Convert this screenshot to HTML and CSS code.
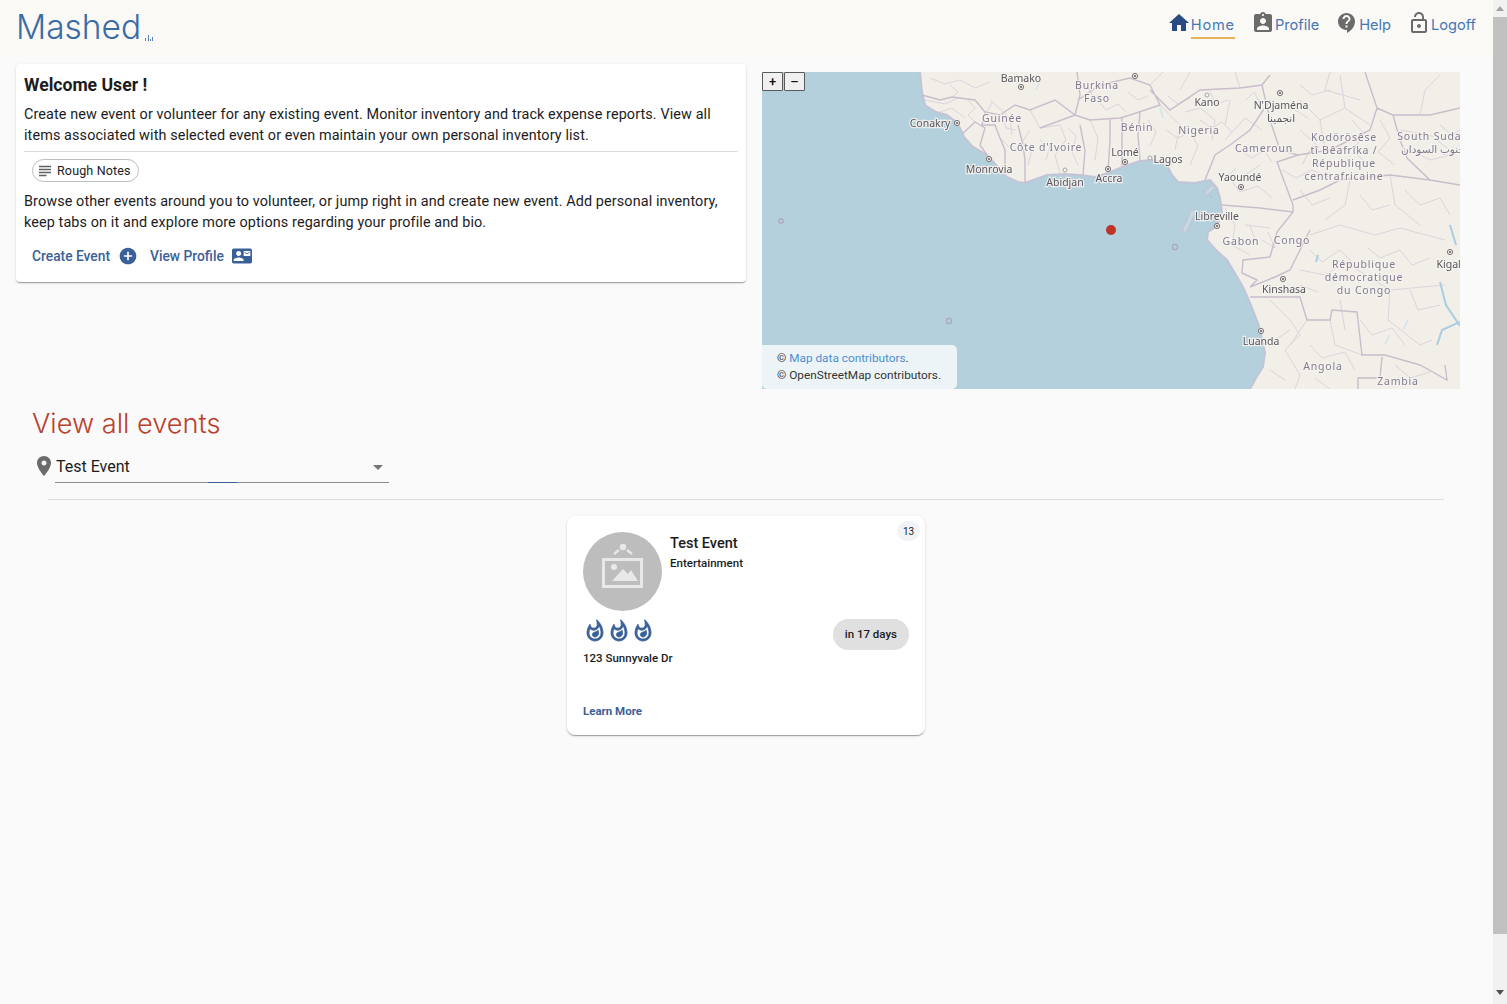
FILE: index.html
```html
<!DOCTYPE html>
<html lang="en">
<head>
    <meta charset="UTF-8">
    <title>Mashed</title>
    <link rel="stylesheet" href="styles.css">
</head>
<body>

<div class="page">

    <header class="topbar">
        <a class="logo">Mashed<svg class="logo-mark" viewBox="0 0 8 6"><path d="M0 3h1v3H0zM3 0h1v6H3zM5 4h1v2H5zM7 2h1v4H7z"/></svg></a>
        <nav class="nav">
            <a class="nav-item nav-active">
                <svg viewBox="0 0 24 24"><path d="M10 20v-6h4v6h5v-8h3L12 3 2 12h3v8z"/></svg>
                <span>Home</span>
            </a>
            <a class="nav-item">
                <svg viewBox="0 0 24 24"><path d="M19 3h-4.18C14.4 1.84 13.3 1 12 1c-1.3 0-2.4.84-2.82 2H5c-1.1 0-2 .9-2 2v14c0 1.1.9 2 2 2h14c1.1 0 2-.9 2-2V5c0-1.1-.9-2-2-2zm-7 0c.55 0 1 .45 1 1s-.45 1-1 1-1-.45-1-1 .45-1 1-1zm0 4c1.66 0 3 1.34 3 3s-1.34 3-3 3-3-1.34-3-3 1.34-3 3-3zm6 12H6v-1.4c0-2 4-3.1 6-3.1s6 1.1 6 3.1V19z"/></svg>
                <span>Profile</span>
            </a>
            <a class="nav-item">
                <svg viewBox="0 0 24 24"><path d="M11.5 2C6.81 2 3 5.81 3 10.5S6.81 19 11.5 19h.5v3c4.86-2.34 8-7 8-11.5C20 5.81 16.19 2 11.5 2zm1 14.5h-2v-2h2v2zm0-3.5h-2c0-3.25 3-3 3-5 0-1.1-.9-2-2-2s-2 .9-2 2h-2c0-2.21 1.79-4 4-4s4 1.79 4 4c0 2.5-3 2.75-3 5z"/></svg>
                <span>Help</span>
            </a>
            <a class="nav-item">
                <svg viewBox="0 0 24 24"><path d="M12 17c1.1 0 2-.9 2-2s-.9-2-2-2-2 .9-2 2 .9 2 2 2zm6-9h-1V6c0-2.76-2.24-5-5-5S7 3.24 7 6h1.9c0-1.71 1.39-3.1 3.1-3.1 1.71 0 3.1 1.39 3.1 3.1v2H6c-1.1 0-2 .9-2 2v10c0 1.1.9 2 2 2h12c1.1 0 2-.9 2-2V10c0-1.1-.9-2-2-2zm0 12H6V10h12v10z"/></svg>
                <span>Logoff</span>
            </a>
        </nav>
    </header>

    <section class="intro">
        <div class="welcome">
            <h2 class="welcome-title">Welcome User !</h2>
            <p class="welcome-text">Create new event or volunteer for any existing event. Monitor inventory and track expense reports. View all items associated with selected event or even maintain your own personal inventory list.</p>
            <hr class="welcome-rule">
            <span class="notes-chip">
                <svg viewBox="0 0 24 24"><path d="M14 17H4v2h10v-2zm6-8H4v2h16V9zM4 15h16v-2H4v2zM4 5v2h16V5H4z"/></svg>
                Rough Notes
            </span>
            <p class="welcome-text">Browse other events around you to volunteer, or jump right in and create new event. Add personal inventory, keep tabs on it and explore more options regarding your profile and bio.</p>
            <div class="welcome-actions">
                <a class="action">Create Event
                    <svg viewBox="0 0 24 24"><path d="M12 2C6.48 2 2 6.48 2 12s4.48 10 10 10 10-4.48 10-10S17.52 2 12 2zm5 11h-4v4h-2v-4H7v-2h4V7h2v4h4v2z"/></svg>
                </a>
                <a class="action">View Profile
                    <svg viewBox="0 0 24 24"><path d="M21 8V7l-3 2-3-2v1l3 2 3-2zm1-5H2C.9 3 0 3.9 0 5v14c0 1.1.9 2 2 2h20c1.1 0 1.99-.9 1.99-2L24 5c0-1.1-.9-2-2-2zM8 6c1.66 0 3 1.34 3 3s-1.34 3-3 3-3-1.34-3-3 1.34-3 3-3zm6 12H2v-1c0-2 4-3.1 6-3.1s6 1.1 6 3.1v1zm8-6h-8V6h8v6z"/></svg>
                </a>
            </div>
        </div>

        <div class="map">
            <svg class="map-canvas" viewBox="762 72 698 317">
                <rect class="sea" x="762" y="72" width="698" height="317"/>
                <path class="land" d="M920 72 L922 92 L925 105 L936 112 L947 115 L955 121 L960 128 L964 137 L972 146 L987 155 L997 166 L1007 177 L1018 182 L1025 183 L1036 179 L1047 175 L1065 174 L1080 175 L1095 177 L1108 173 L1125 166 L1140 161 L1153 160 L1167 165 L1172 175 L1178 182 L1195 183 L1210 180 L1217 188 L1220 198 L1222 212 L1217 226 L1208 232 L1207 240 L1216 250 L1227 260 L1236 275 L1243 287 L1250 303 L1258 323 L1262 338 L1265 353 L1263 367 L1256 378 L1250 389 L1460 389 L1460 72 Z"/>
                <path class="inlet-edge" d="M1185 230 L1193 212 M1207 193 L1212 188"/>
                <path class="inlet" d="M1185 230 L1193 212 M1207 193 L1212 188"/>
                <path class="coast" d="M920 72 L922 92 L925 105 L936 112 L947 115 L955 121 L960 128 L964 137 L972 146 L987 155 L997 166 L1007 177 L1018 182 L1025 183 L1036 179 L1047 175 L1065 174 L1080 175 L1095 177 L1108 173 L1125 166 L1140 161 L1153 160 L1167 165 L1172 175 L1178 182 L1195 183 L1210 180 L1217 188 L1220 198 L1222 212 L1217 226 L1208 232 L1207 240 L1216 250 L1227 260 L1236 275 L1243 287 L1250 303 L1258 323 L1262 338 L1265 353 L1263 367 L1256 378 L1250 389"/>
                <path class="border-thin" d="M930 78 L945 84 L960 80 L975 88 L990 82 M925 100 L945 104 L958 98 M940 112 L952 108 L965 118 M990 100 L1010 118 L1012 135 M1030 110 L1040 128 L1060 125 L1066 140 L1055 155 L1060 174 M1000 138 L1012 150 M1090 120 L1098 138 L1095 160 M1150 85 L1165 70 M1160 105 L1180 125 L1175 150 M1185 112 L1200 108 L1215 120 L1212 140 M1230 100 L1225 125 M1180 90 L1190 72 M1240 88 L1235 72 M1300 100 L1320 120 L1345 108 L1370 125 M1320 120 L1325 150 M1300 130 L1320 148 M1345 108 L1340 75 M1400 130 L1430 135 L1450 150 M1420 115 L1425 90 L1440 75 M1350 180 L1345 205 L1325 220 M1390 175 L1395 205 L1420 225 M1310 235 L1340 225 L1375 235 L1400 228 L1445 240 M1300 270 L1325 275 L1345 262 L1390 290 L1445 285 M1340 300 L1345 330 M1390 290 L1388 320 L1420 345 L1432 340 M1270 300 L1290 320 L1300 335 L1285 350 L1300 375 L1295 389 M1307 320 L1290 345 M1330 320 L1335 345 L1362 355 M1225 208 L1235 225 L1232 245 L1250 255 M1245 225 L1270 228 M1225 140 L1245 118 L1262 130 M1260 165 L1245 175 M1330 72 L1325 90 L1360 100"/>
                <path class="border-thin" d="M950 85 L958 92 L952 97 M968 100 L975 108 L968 115 L975 122 M992 103 L985 115 L995 118 M1002 115 L1006 128 L1016 130 M1030 130 L1022 142 L1032 150 L1028 165 M1040 140 L1050 146 L1046 160 M1068 128 L1076 136 L1072 152 L1078 165 M1098 100 L1106 110 L1118 104 L1126 112 M1090 90 L1094 100 M1128 92 L1138 100 L1148 96 M1148 120 L1156 132 L1150 146 M1166 130 L1178 138 L1190 132 L1198 146 L1190 165 M1200 120 L1212 128 L1222 122 L1232 132 M1168 96 L1178 104 L1190 98 M1210 92 L1216 104 L1228 100 M1246 100 L1254 92 L1262 106 M1240 150 L1252 158 L1264 150 L1272 162 M1236 168 L1228 176 L1240 192 L1258 186 L1272 198 M1282 170 L1296 178 L1312 170 L1330 178 M1310 150 L1302 165 M1352 120 L1365 135 L1352 150 L1368 165 M1380 120 L1390 138 L1378 152 L1395 165 M1410 150 L1430 160 L1450 155 M1440 125 L1452 135 L1460 130 M1300 85 L1312 95 L1330 90 M1295 110 L1308 118 M1300 190 L1312 205 L1330 198 M1360 195 L1372 210 L1390 205 M1405 190 L1420 205 L1440 198 L1450 215 M1310 250 L1322 262 L1340 250 L1352 262 M1368 248 L1380 258 L1400 250 L1412 265 L1430 258 M1262 240 L1275 248 L1268 232 M1250 225 L1255 240 M1300 285 L1318 292 M1410 290 L1418 310 L1440 305 M1360 320 L1372 335 L1392 328 L1405 345 M1310 345 L1322 358 L1345 352 L1355 370 M1275 340 L1290 330 M1270 370 L1285 380 M1315 378 L1330 389 M1395 365 L1410 378 L1430 372"/>
                <path class="border" d="M922 95 L940 100 L952 97 L975 100 L985 112 L982 125 L995 125 L1000 138 L1005 150 L1005 172 M962 134 L975 122 L985 128 L980 145 L987 155 M985 112 L1000 115 L1015 105 L1030 110 L1055 100 L1075 115 L1080 95 L1077 72 M1078 100 L1100 85 L1130 78 L1150 85 L1160 105 L1130 115 L1120 118 L1090 120 L1075 115 L1040 128 M1018 125 L1023 145 L1025 160 L1025 183 M1080 125 L1085 150 L1083 175 M1110 118 L1110 140 L1108 172 M1122 118 L1122 140 L1122 166 M1140 112 L1138 135 L1140 161 M1150 90 L1170 110 L1200 90 L1240 88 L1262 85 L1270 75 M1270 100 L1250 130 L1230 145 L1215 155 L1205 180 M1262 85 L1270 120 L1280 150 L1298 155 L1277 162 L1293 205 L1293 212 L1260 208 L1222 205 M1298 155 L1330 150 L1370 130 L1377 108 L1393 115 L1400 140 L1407 158 L1430 180 L1460 185 M1377 108 L1365 72 M1393 115 L1430 115 L1460 108 M1293 200 L1320 190 L1340 180 L1390 175 L1430 180 M1293 212 L1277 232 L1270 257 L1243 260 L1242 273 L1257 280 L1250 287 L1275 277 L1290 270 L1310 230 M1250 297 L1300 297 L1307 320 L1330 320 L1332 310 L1357 312 L1362 355 L1385 355 L1420 365 L1447 380 L1445 365 M1358 389 L1358 378 L1380 378 L1382 357"/>
                <path class="lake" d="M1437 345 L1442 330 L1460 322 M1440 282 L1446 305 L1460 326 M1318 255 L1316 262 M1212 198 L1208 194 M1450 225 L1456 245"/>
                <path class="rivers" d="M1403 330 L1408 320 M1390 335 L1385 344 M1040 82 L1036 90 M1160 108 L1163 118"/>

                <circle class="islet" cx="781" cy="221" r="2.2"/>
                <circle class="islet" cx="1175" cy="247" r="2.6"/>
                <circle class="islet" cx="949" cy="321" r="2.6"/>

                <g class="city-rings">
                    <circle cx="1021" cy="87" r="2.6"/>
                    <circle cx="957" cy="123" r="2.6"/>
                    <circle cx="989" cy="159" r="2.6"/>
                    <circle cx="1108" cy="169" r="2.6"/>
                    <circle cx="1125" cy="162" r="2.6"/>
                    <circle cx="1135" cy="76" r="2.6"/>
                    <circle cx="1280" cy="93" r="2.6"/>
                    <circle cx="1241" cy="187" r="2.6"/>
                    <circle cx="1217" cy="226" r="2.6"/>
                    <circle cx="1283" cy="279" r="2.6"/>
                    <circle cx="1261" cy="331" r="2.6"/>
                    <circle cx="1450" cy="252" r="2.6"/>
                </g>
                <g class="city-dots">
                    <circle cx="1021" cy="87" r="1.1"/>
                    <circle cx="957" cy="123" r="1.1"/>
                    <circle cx="989" cy="159" r="1.1"/>
                    <circle cx="1108" cy="169" r="1.1"/>
                    <circle cx="1125" cy="162" r="1.1"/>
                    <circle cx="1135" cy="76" r="1.1"/>
                    <circle cx="1280" cy="93" r="1.1"/>
                    <circle cx="1241" cy="187" r="1.1"/>
                    <circle cx="1217" cy="226" r="1.1"/>
                    <circle cx="1283" cy="279" r="1.1"/>
                    <circle cx="1261" cy="331" r="1.1"/>
                    <circle cx="1450" cy="252" r="1.1"/>
                </g>
                <circle class="town" cx="1207" cy="95" r="2"/>
                <circle class="town" cx="1065" cy="170" r="2"/>
                <circle class="town" cx="1150" cy="158" r="2"/>

                <g class="country">
                    <text x="1097" y="89">Burkina</text>
                    <text x="1097" y="102">Faso</text>
                    <text x="1002" y="122">Guinée</text>
                    <text x="1046" y="151">Côte d'Ivoire</text>
                    <text x="1137" y="131">Bénin</text>
                    <text x="1199" y="134">Nigeria</text>
                    <text x="1264" y="152">Cameroun</text>
                    <text x="1344" y="141">Kodörösêse</text>
                    <text x="1344" y="154">tî Bêafrîka /</text>
                    <text x="1344" y="167">République</text>
                    <text x="1344" y="180">centrafricaine</text>
                    <text x="1433" y="140">South Sudan</text>
                    <text x="1433" y="153">جنوب السودان</text>
                    <text x="1241" y="245">Gabon</text>
                    <text x="1292" y="244">Congo</text>
                    <text x="1364" y="268">République</text>
                    <text x="1364" y="281">démocratique</text>
                    <text x="1364" y="294">du Congo</text>
                    <text x="1323" y="370">Angola</text>
                    <text x="1398" y="385">Zambia</text>
                </g>
                <g class="city">
                    <text x="1021" y="82">Bamako</text>
                    <text x="930" y="127">Conakry</text>
                    <text x="989" y="173">Monrovia</text>
                    <text x="1065" y="186">Abidjan</text>
                    <text x="1109" y="182">Accra</text>
                    <text x="1125" y="156">Lomé</text>
                    <text x="1168" y="163">Lagos</text>
                    <text x="1207" y="106">Kano</text>
                    <text x="1281" y="109">N'Djaména</text>
                    <text x="1281" y="122">انجمينا</text>
                    <text x="1240" y="181">Yaoundé</text>
                    <text x="1217" y="220">Libreville</text>
                    <text x="1284" y="293">Kinshasa</text>
                    <text x="1261" y="345">Luanda</text>
                    <text x="1450" y="268">Kigali</text>
                </g>
                <circle class="marker" cx="1111" cy="230" r="5"/>
            </svg>
            <div class="zoom-controls">
                <button class="zoom-btn">+</button>
                <button class="zoom-btn">–</button>
            </div>
            <div class="attribution">
                <div>© <a>Map data contributors</a>.</div>
                <div>© OpenStreetMap contributors.</div>
            </div>
        </div>
    </section>

    <section class="events">
        <h1 class="events-title">View all events</h1>
        <div class="filter">
            <svg class="filter-pin" viewBox="0 0 24 24"><path d="M12 2C8.13 2 5 5.13 5 9c0 5.25 7 13 7 13s7-7.75 7-13c0-3.87-3.13-7-7-7zm0 9.5c-1.38 0-2.5-1.12-2.5-2.5s1.12-2.5 2.5-2.5 2.5 1.12 2.5 2.5-1.12 2.5-2.5 2.5z"/></svg>
            <div class="select">
                <span>Test Event</span>
                <span class="select-arrow"></span>
                <span class="select-ripple"></span>
            </div>
        </div>
        <hr class="events-rule">

        <div class="event-list">
            <article class="event-card">
                <span class="count">13</span>
                <div class="event-head">
                    <div class="avatar">
                        <svg viewBox="0 0 79 79">
                            <circle class="ph-fill" cx="40" cy="15" r="3.2"/>
                            <path class="ph-line" d="M36 18 L31 22 M44 18 L49 22"/>
                            <rect class="ph-frame" x="20.5" y="27.5" width="38" height="27"/>
                            <circle class="ph-fill" cx="31" cy="35" r="3"/>
                            <path class="ph-fill" d="M29 49 L40 37 L45 42 L48 38 L55 49 Z"/>
                        </svg>
                    </div>
                    <div>
                        <div class="event-name">Test Event</div>
                        <div class="event-type">Entertainment</div>
                    </div>
                </div>
                <div class="event-mid">
                    <div>
                        <div class="flames">
                            <svg viewBox="0 0 24 24"><path d="M11.57 13.16c-1.36.28-2.17 1.16-2.17 2.41 0 1.34 1.11 2.42 2.49 2.42 2.05 0 3.71-1.66 3.71-3.71 0-1.07-.15-2.12-.46-3.12-.79 1.07-2.2 1.72-3.57 2zM13.5.67s.74 2.65.74 4.8c0 2.06-1.35 3.73-3.41 3.73-2.07 0-3.63-1.67-3.63-3.73l.03-.36C5.21 7.51 4 10.62 4 14c0 4.42 3.58 8 8 8s8-3.58 8-8C20 8.61 17.41 3.8 13.5.67zM12 20c-3.31 0-6-2.69-6-6 0-1.53.3-3.04.86-4.43 1.01 1.01 2.41 1.63 3.97 1.63 2.66 0 4.75-1.83 5.28-4.43C17.34 8.97 18 11.44 18 14c0 3.31-2.69 6-6 6z"/></svg>
                            <svg viewBox="0 0 24 24"><path d="M11.57 13.16c-1.36.28-2.17 1.16-2.17 2.41 0 1.34 1.11 2.42 2.49 2.42 2.05 0 3.71-1.66 3.71-3.71 0-1.07-.15-2.12-.46-3.12-.79 1.07-2.2 1.72-3.57 2zM13.5.67s.74 2.65.74 4.8c0 2.06-1.35 3.73-3.41 3.73-2.07 0-3.63-1.67-3.63-3.73l.03-.36C5.21 7.51 4 10.62 4 14c0 4.42 3.58 8 8 8s8-3.58 8-8C20 8.61 17.41 3.8 13.5.67zM12 20c-3.31 0-6-2.69-6-6 0-1.53.3-3.04.86-4.43 1.01 1.01 2.41 1.63 3.97 1.63 2.66 0 4.75-1.83 5.28-4.43C17.34 8.97 18 11.44 18 14c0 3.31-2.69 6-6 6z"/></svg>
                            <svg viewBox="0 0 24 24"><path d="M11.57 13.16c-1.36.28-2.17 1.16-2.17 2.41 0 1.34 1.11 2.42 2.49 2.42 2.05 0 3.71-1.66 3.71-3.71 0-1.07-.15-2.12-.46-3.12-.79 1.07-2.2 1.72-3.57 2zM13.5.67s.74 2.65.74 4.8c0 2.06-1.35 3.73-3.41 3.73-2.07 0-3.63-1.67-3.63-3.73l.03-.36C5.21 7.51 4 10.62 4 14c0 4.42 3.58 8 8 8s8-3.58 8-8C20 8.61 17.41 3.8 13.5.67zM12 20c-3.31 0-6-2.69-6-6 0-1.53.3-3.04.86-4.43 1.01 1.01 2.41 1.63 3.97 1.63 2.66 0 4.75-1.83 5.28-4.43C17.34 8.97 18 11.44 18 14c0 3.31-2.69 6-6 6z"/></svg>
                        </div>
                        <div class="event-address">123 Sunnyvale Dr</div>
                    </div>
                    <span class="days-chip">in 17 days</span>
                </div>
                <a class="learn-more">Learn More</a>
            </article>
        </div>
    </section>

</div>

<!-- Window scrollbar -->
<div class="scrollbar">
    <span class="scroll-up"></span>
    <span class="scroll-thumb"></span>
    <span class="scroll-down"></span>
</div>

</body>
</html>
```

FILE: styles.css
```css
body {
    margin: 0;
    height: 100vh;
    overflow: hidden;
    display: flex;
    background-color: #fafafa;
    color: #1c1c1c;
    font-family: Roboto, "Liberation Sans", sans-serif;
}

.page {
    flex: 1;
    min-width: 0;
}

/* Top bar */
.topbar {
    height: 56px;
    display: flex;
    justify-content: space-between;
    padding: 0 17px 0 16px;
    background-color: #faf9f6;
}

.logo {
    display: flex;
    align-items: flex-end;
    height: 49px;
    color: #3a6ba5;
    font-family: Inter, sans-serif;
    font-size: 33.5px;
    font-weight: 350;
    line-height: 44px;
}

.logo-mark {
    width: 8px;
    height: 6px;
    margin: 0 0 8px 4px;
    fill: #5f84b3;
}

.nav {
    display: flex;
    gap: 16px;
    height: 48px;
    align-items: flex-start;
    padding-top: 11px;
    box-sizing: border-box;
}

.nav-item {
    display: flex;
    align-items: flex-start;
    color: #4577b3;
    font-family: Inter, sans-serif;
    font-size: 14.6px;
}

.nav-item svg {
    width: 24px;
    height: 24px;
    fill: #6b6b6b;
}

.nav-item span {
    line-height: 20px;
    padding: 4px 0 2px;
}

.nav-active svg {
    fill: #2a4a82;
}

.nav-active span {
    border-bottom: 2px solid #e8b25f;
    letter-spacing: 0.8px;
}

/* Welcome card and map */
.intro {
    display: grid;
    grid-template-columns: 730px 698px;
    gap: 16px;
    margin-top: 8px;
    padding-left: 16px;
}

.welcome {
    height: 218px;
    box-sizing: border-box;
    padding: 8px;
    background-color: white;
    border-radius: 4px;
    box-shadow: 0 2px 1px -1px rgba(0,0,0,.2), 0 1px 1px 0 rgba(0,0,0,.14), 0 1px 3px 0 rgba(0,0,0,.12);
}

.welcome-title {
    margin: 0;
    font-size: 17.6px;
    font-weight: 700;
    line-height: 26px;
}

.welcome-text {
    margin: 0;
    font-size: 14.4px;
    letter-spacing: 0.11px;
    line-height: 21px;
}

.welcome-text:first-of-type {
    margin-top: 6px;
}

.welcome-rule {
    margin: 5px 0 7px;
    border: none;
    border-top: 1px solid #dcdcdc;
}

.notes-chip {
    display: inline-flex;
    align-items: center;
    gap: 3px;
    height: 21px;
    margin: 0 0 9px 8px;
    padding: 0 7px 0 3px;
    border: 1px solid #bdbdbd;
    border-radius: 12px;
    font-size: 12.5px;
    letter-spacing: 0.15px;
    vertical-align: top;
}

.notes-chip svg {
    width: 18px;
    height: 18px;
    fill: #616161;
}

.welcome-actions {
    display: flex;
    gap: 12px;
    padding: 13px 8px 0;
}

.action {
    display: flex;
    align-items: center;
    gap: 8px;
    color: #3a6098;
    font-size: 13.8px;
    font-weight: 500;
    line-height: 20px;
}

.action svg {
    width: 20px;
    height: 20px;
    fill: #3a6098;
}

/* Map */
.map {
    position: relative;
    height: 317px;
    margin-top: 8px;
    overflow: hidden;
}

.map-canvas {
    display: block;
    width: 698px;
    height: 317px;
    filter: blur(0.35px);
}

.sea { fill: #b3d0dc; }
.land { fill: #f2efe9; }

.coast {
    fill: none;
    stroke: #c3c4d6;
    stroke-width: 2;
}

.border {
    fill: none;
    stroke: #c9bdcb;
    stroke-width: 1.4;
}

.border-thin {
    fill: none;
    stroke: #d8d0da;
    stroke-width: 0.9;
}

.lake {
    fill: none;
    stroke: #aacde0;
    stroke-width: 2;
}

.inlet-edge {
    fill: none;
    stroke: #c3c4d6;
    stroke-width: 6;
    stroke-linecap: round;
}

.inlet {
    fill: none;
    stroke: #c4d9e2;
    stroke-width: 3.5;
    stroke-linecap: round;
}

.rivers {
    fill: none;
    stroke: #cfe3ec;
    stroke-width: 1.5;
}

.islet {
    fill: none;
    stroke: #a9a6bd;
    stroke-width: 1.2;
}

.city-rings circle {
    fill: #f2efe9;
    stroke: #777277;
    stroke-width: 1;
}

.city-dots circle {
    fill: #666166;
}

.town {
    fill: #f7f5f1;
    stroke: #a8a4a8;
    stroke-width: 1;
}

.country text,
.city text {
    font-family: "Noto Sans", "DejaVu Sans", sans-serif;
    text-anchor: middle;
    paint-order: stroke;
    stroke: rgba(245,243,238,.85);
    stroke-width: 2.5px;
}

.country text {
    fill: #857a90;
    font-size: 10.5px;
    letter-spacing: 0.8px;
}

.city text {
    fill: #5b555e;
    font-size: 10.5px;
}

.marker {
    fill: #bf3328;
}

.zoom-controls {
    position: absolute;
    top: 0;
    left: 0;
    display: flex;
    gap: 1px;
}

.zoom-btn {
    width: 21px;
    height: 19px;
    padding: 0;
    background-color: #f0f0f0;
    border: 1px solid #5a5a5a;
    border-radius: 1px;
    color: #111;
    font-family: Roboto, sans-serif;
    font-size: 13px;
    font-weight: 500;
    line-height: 15px;
}

.attribution {
    position: absolute;
    left: 0;
    bottom: 0;
    width: 180px;
    padding: 5px 0 5px 15px;
    background-color: #edf4f7;
    border-radius: 0 5px 5px 5px;
    color: #333;
    font-size: 11.8px;
    line-height: 17px;
}

.attribution a {
    color: #4a8fd0;
}

/* Events */
.events {
    padding: 0 49px 0 32px;
}

.events-title {
    margin: 18px 0 0;
    color: #b9412e;
    font-family: Inter, sans-serif;
    font-size: 27.2px;
    font-weight: 350;
    line-height: 34px;
}

.filter {
    display: flex;
    align-items: flex-end;
    margin-top: 10px;
}

.filter-pin {
    width: 24px;
    height: 24px;
    margin-bottom: 5px;
    fill: #6b6b6b;
}

.select {
    position: relative;
    display: flex;
    justify-content: space-between;
    align-items: center;
    width: 333px;
    height: 31px;
    margin-left: -1px;
    padding-left: 1px;
    border-bottom: 1px solid #8c8c8c;
    font-size: 16px;
}

.select-arrow {
    width: 0;
    height: 0;
    margin-right: 6px;
    margin-top: 2px;
    border-left: 5px solid transparent;
    border-right: 5px solid transparent;
    border-top: 5px solid #757575;
}

.select-ripple {
    position: absolute;
    left: 153px;
    bottom: -1px;
    width: 29px;
    height: 1px;
    background-color: #3a6098;
}

.events-rule {
    margin: 16px 0 0 16px;
    border: none;
    border-top: 1px solid #dedede;
}

.event-list {
    display: flex;
    justify-content: center;
    margin: 16px -16px 0 0;
}

.event-card {
    position: relative;
    display: flex;
    flex-direction: column;
    width: 358px;
    height: 219px;
    box-sizing: border-box;
    padding: 16px;
    background-color: white;
    border-radius: 8px;
    box-shadow: 0 2px 1px -1px rgba(0,0,0,.2), 0 1px 1px 0 rgba(0,0,0,.14), 0 1px 3px 0 rgba(0,0,0,.12);
}

.count {
    position: absolute;
    top: 5px;
    right: 5px;
    width: 23px;
    height: 20px;
    background-color: #f2f3f6;
    border-radius: 10px;
    font-size: 10px;
    line-height: 21px;
    text-align: center;
}

.event-head {
    display: flex;
    gap: 8px;
}

.avatar {
    width: 79px;
    height: 79px;
    flex: none;
    background-color: #bdbdbd;
    border-radius: 50%;
}

.avatar svg {
    display: block;
}

.ph-fill { fill: #e8e8e8; }

.ph-line {
    fill: none;
    stroke: #e8e8e8;
    stroke-width: 2.4;
}

.ph-frame {
    fill: none;
    stroke: #e8e8e8;
    stroke-width: 3;
}

.event-name {
    margin-top: 3px;
    font-size: 14.5px;
    font-weight: 500;
    line-height: 18px;
}

.event-type {
    margin-top: 1px;
    font-size: 11.5px;
    font-weight: 500;
    line-height: 18px;
}

.event-mid {
    display: flex;
    justify-content: space-between;
    align-items: flex-start;
    margin-top: 8px;
}

.flames {
    display: flex;
    height: 24px;
}

.flames svg {
    width: 24px;
    height: 24px;
    fill: #3a6098;
    stroke: #3a6098;
    stroke-width: 0.8;
}

.event-address {
    margin-top: 6px;
    font-size: 11.5px;
    font-weight: 500;
    line-height: 18px;
}

.days-chip {
    padding: 0 12px;
    height: 31px;
    background-color: #e0e0e0;
    border-radius: 16px;
    font-size: 11.5px;
    font-weight: 500;
    line-height: 31px;
}

.learn-more {
    margin-top: auto;
    color: #3a6098;
    font-size: 11.5px;
    font-weight: 700;
    line-height: 16px;
}

/* Scrollbar */
.scrollbar {
    width: 14px;
    flex: none;
    display: flex;
    flex-direction: column;
    align-items: center;
    background-color: #f1f1f1;
}

.scroll-up {
    flex: none;
    margin: 6px 0 6px;
    width: 0;
    height: 0;
    border-left: 4px solid transparent;
    border-right: 4px solid transparent;
    border-bottom: 5px solid #a3a3a3;
}

.scroll-thumb {
    width: 100%;
    height: 917px;
    background-color: #c1c1c1;
}

.scroll-down {
    flex: none;
    margin-top: 56px;
    width: 0;
    height: 0;
    border-left: 4px solid transparent;
    border-right: 4px solid transparent;
    border-top: 5px solid #505050;
}
```
